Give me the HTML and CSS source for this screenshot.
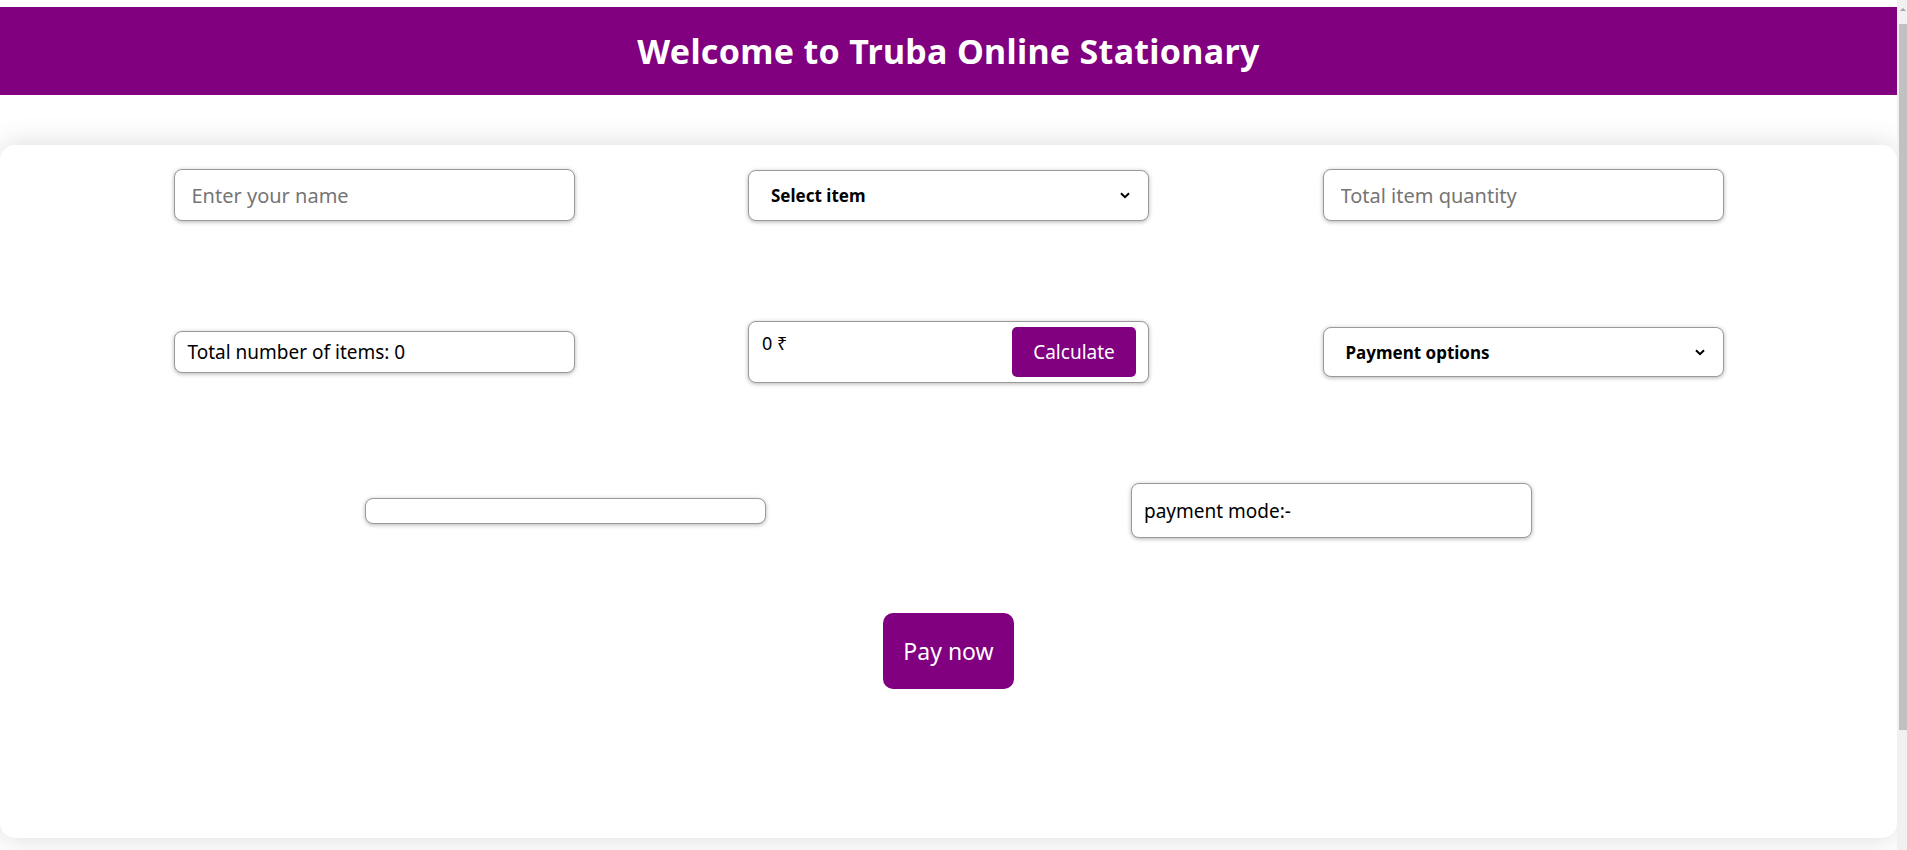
FILE: index.html
```html
<!DOCTYPE html>
<html lang="en">
<head>
<meta charset="utf-8">
<title>Truba Online Stationary</title>
<link rel="stylesheet" href="styles.css">
</head>
<body>
<header class="top">
  <h1 class="title">Welcome to Truba Online Stationary</h1>
</header>
<main class="card">
  <div class="rows">
    <div class="row row-1">
      <input class="field field-input" type="text" placeholder="Enter your name">
      <div class="field field-select">
        <select class="select"><option>Select item</option></select>
        <svg class="chev" width="10" height="7" viewBox="0 0 10 7"><path d="M1 1.2 L5 5.2 L9 1.2" fill="none" stroke="#000" stroke-width="2"/></svg>
      </div>
      <input class="field field-input" type="text" placeholder="Total item quantity">
    </div>
    <div class="row row-2">
      <div class="field field-info">Total number of items: 0</div>
      <div class="field field-calc">
        <span class="amount">0 ₹</span>
        <button class="btn-calc" type="button">Calculate</button>
      </div>
      <div class="field field-select field-select-2">
        <select class="select"><option>Payment options</option></select>
        <svg class="chev" width="10" height="7" viewBox="0 0 10 7"><path d="M1 1.2 L5 5.2 L9 1.2" fill="none" stroke="#000" stroke-width="2"/></svg>
      </div>
    </div>
    <div class="row row-3">
      <div class="field field-empty"></div>
      <div class="field field-mode">payment mode:-</div>
    </div>
  </div>
  <div class="pay-row">
    <button class="btn-pay" type="button">Pay now</button>
  </div>
</main>
<div class="scrollbar" aria-hidden="true">
  <div class="scroll-arrow"></div>
  <div class="scroll-thumb"></div>
</div>
</body>
</html>
```
FILE: styles.css
```css
body {
  margin: 0 10px 0 0;
  font-family: "Noto Sans", "Open Sans", sans-serif;
  color: #000;
  background: #fff;
}

.top {
  margin-top: 7px;
  height: 88px;
  background: #800080;
  display: flex;
  align-items: center;
  justify-content: center;
}

.title {
  margin: 0;
  color: #fff;
  font-size: 34px;
  font-weight: 700;
  letter-spacing: 0.3px;
}

.card {
  margin: 50px 0 148px;
  background: #fff;
  border-radius: 15px;
  box-shadow: 0 0 30px rgba(0, 0, 0, 0.15);
  padding: 24px 0 149px;
}

.rows {
  display: flex;
  flex-direction: column;
  gap: 100px;
}

.row {
  display: flex;
  justify-content: space-evenly;
  align-items: center;
}

.row-1 { height: 52px; }
.row-2 { height: 62px; }
.row-3 { height: 55px; }

.field {
  box-sizing: border-box;
  width: 401px;
  border: 1px solid #9a9a9a;
  border-radius: 8px;
  box-shadow: 0 1px 4px rgba(0, 0, 0, 0.3);
  background: #fff;
  font-family: inherit;
  color: #000;
}

.field-input {
  height: 52px;
  padding: 0 17px;
  font-size: 20px;
  outline: none;
}

.field-input::placeholder {
  color: #757575;
}

.field-select {
  height: 51px;
  display: flex;
  align-items: center;
  padding: 0 18px 0 22px;
}

.field-select-2 {
  height: 50px;
}

.select {
  flex: 1;
  appearance: none;
  -webkit-appearance: none;
  border: none;
  background: transparent;
  padding: 0;
  margin: 0;
  font-family: inherit;
  font-size: 17px;
  font-weight: 700;
  color: #000;
  outline: none;
}

.chev {
  display: block;
}

.field-info {
  height: 42px;
  display: flex;
  align-items: center;
  padding: 0 13px;
  font-size: 19px;
}

.field-calc {
  height: 62px;
  display: flex;
  justify-content: space-between;
  align-items: flex-start;
  padding: 5px 12px;
}

.amount {
  font-size: 18px;
  padding-top: 4px;
  padding-left: 1px;
}

.btn-calc {
  width: 124px;
  height: 50px;
  border: none;
  border-radius: 5px;
  background: #800080;
  color: #fff;
  font-family: inherit;
  font-size: 19px;
}

.field-empty {
  height: 26px;
}

.field-mode {
  height: 55px;
  display: flex;
  align-items: center;
  padding: 0 12px;
  font-size: 19px;
}

.pay-row {
  display: flex;
  justify-content: center;
  margin-top: 75px;
}

.btn-pay {
  width: 131px;
  height: 76px;
  border: none;
  border-radius: 10px;
  background: #800080;
  color: #fff;
  font-family: inherit;
  font-size: 23px;
}

.scrollbar {
  position: fixed;
  top: 0;
  right: 0;
  width: 10px;
  height: 100vh;
  background: #f1f1f1;
  display: flex;
  flex-direction: column;
  align-items: flex-end;
}

.scroll-arrow {
  width: 0;
  height: 0;
  margin: 8px 1px 0 0;
  border-left: 3px solid transparent;
  border-right: 3px solid transparent;
  border-bottom: 3px solid #a3a3a3;
}

.scroll-thumb {
  width: 8px;
  height: 706px;
  margin-top: 13px;
  background: #c1c1c1;
}
```
